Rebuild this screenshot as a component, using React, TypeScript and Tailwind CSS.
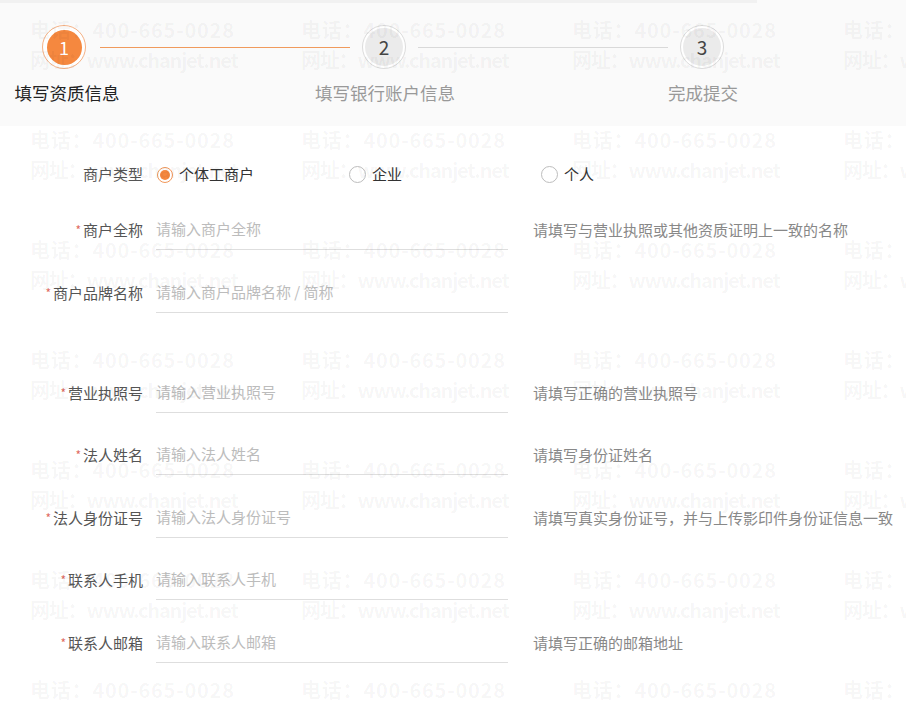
import React from 'react';

const FONT = { fontFamily: '"Microsoft YaHei", "Noto Sans CJK SC", "Noto Sans", sans-serif' };

type Field = {
  label: string;
  placeholder: string;
  hint?: string;
  gapBefore?: boolean;
};

const FIELDS: Field[] = [
  { label: '商户全称', placeholder: '请输入商户全称', hint: '请填写与营业执照或其他资质证明上一致的名称' },
  { label: '商户品牌名称', placeholder: '请输入商户品牌名称 / 简称' },
  { label: '营业执照号', placeholder: '请输入营业执照号', hint: '请填写正确的营业执照号', gapBefore: true },
  { label: '法人姓名', placeholder: '请输入法人姓名', hint: '请填写身份证姓名' },
  { label: '法人身份证号', placeholder: '请输入法人身份证号', hint: '请填写真实身份证号，并与上传影印件身份证信息一致' },
  { label: '联系人手机', placeholder: '请输入联系人手机' },
  { label: '联系人邮箱', placeholder: '请输入联系人邮箱', hint: '请填写正确的邮箱地址' },
];

const RADIOS = ['个体工商户', '企业', '个人'];

function Watermark() {
  // repeating contact watermark laid over the whole page
  const cells = Array.from({ length: 28 });
  return (
    <div className="pointer-events-none absolute inset-0 overflow-hidden select-none">
      <div className="grid grid-cols-[repeat(4,271px)] auto-rows-[110px] pl-[30px] pt-[15px]">
        {cells.map((_, i) => (
          <div key={i} className="text-[20px] font-bold leading-[30px] whitespace-nowrap text-[rgba(0,0,0,0.045)]">
            <div className="tracking-[0.8px]">电话：400-665-0028</div>
            <div className="tracking-[-1.2px]">网址：www.chanjet.net</div>
          </div>
        ))}
      </div>
    </div>
  );
}

function Steps() {
  return (
    <div className="relative h-[126px] bg-[#fafafa]">
      <div className="h-[3px] w-[757px] bg-[#f1f1f1]" />
      <div className="flex items-center pl-[42px] pt-[22px]">
        <div className="flex h-[44px] w-[44px] items-center justify-center rounded-full border border-[#f5b185] bg-white">
          <div className="flex h-[35px] w-[35px] items-center justify-center rounded-full bg-[#f5883f] text-[18px] text-white">
            1
          </div>
        </div>
        <div className="ml-[14px] mr-[12px] h-px w-[250px] bg-[#f09a5c]" />
        <div className="flex h-[44px] w-[44px] items-center justify-center rounded-full border border-[#dcdcdc] bg-white">
          <div className="flex h-[38px] w-[38px] items-center justify-center rounded-full bg-[#ebebeb] text-[19px] text-[#444]">
            2
          </div>
        </div>
        <div className="mx-[12px] h-px w-[250px] bg-[#d9d9d9]" />
        <div className="flex h-[44px] w-[44px] items-center justify-center rounded-full border border-[#dcdcdc] bg-white">
          <div className="flex h-[38px] w-[38px] items-center justify-center rounded-full bg-[#ebebeb] text-[19px] text-[#444]">
            3
          </div>
        </div>
      </div>
      <div className="ml-[-3px] mt-[12px] flex gap-[178px] text-[17.5px] leading-[24px]">
        <div className="w-[140px] text-center text-[#222]">填写资质信息</div>
        <div className="w-[140px] whitespace-nowrap text-center text-[#999]">填写银行账户信息</div>
        <div className="w-[140px] text-center text-[#999]">完成提交</div>
      </div>
    </div>
  );
}

function Label({ text, required }: { text: string; required?: boolean }) {
  return (
    <div className="w-[143px] shrink-0 text-right text-[15px] text-[#555]">
      {required && <span className="mr-[2px] align-[1px] text-[12px] text-[#e06b63]">*</span>}
      {text}
    </div>
  );
}

export default function App() {
  return (
    <div className="relative min-h-[707px] w-full overflow-hidden bg-white" style={FONT}>
      <Steps />

      <div className="flex flex-col pt-[29px]">
        {/* merchant type */}
        <div className="flex h-[39px] items-center">
          <Label text="商户类型" />
          <div className="ml-[14px] flex">
            {RADIOS.map((r, i) => (
              <label key={r} className="flex w-[192px] items-center gap-[6px] text-[15px] text-[#333]">
                {i === 0 ? (
                  <span className="flex h-[16px] w-[16px] items-center justify-center rounded-full border border-[#f2985a] bg-white">
                    <span className="h-[10px] w-[10px] rounded-full bg-[#f5883f]" />
                  </span>
                ) : (
                  <span className="h-[17px] w-[17px] rounded-full border border-[#bdbdbd] bg-white" />
                )}
                {r}
              </label>
            ))}
          </div>
        </div>

        <div className="mt-[17px] flex flex-col gap-[23.5px]">
          {FIELDS.map((f) => (
            <div key={f.label} className={`flex h-[39px] items-center ${f.gapBefore ? 'mt-[37.5px]' : ''}`}>
              <Label text={f.label} required />
              <div className="ml-[13px] flex h-[39px] w-[352px] shrink-0 items-center border-b border-[#dedede] pb-px">
                <input
                  className="w-full bg-transparent text-[15px] text-[#333] outline-none placeholder:text-[#bcbcbc]"
                  placeholder={f.placeholder}
                />
              </div>
              {f.hint && <div className="ml-[25px] whitespace-nowrap text-[15px] text-[#888]">{f.hint}</div>}
            </div>
          ))}
        </div>
      </div>

      <Watermark />
    </div>
  );
}
